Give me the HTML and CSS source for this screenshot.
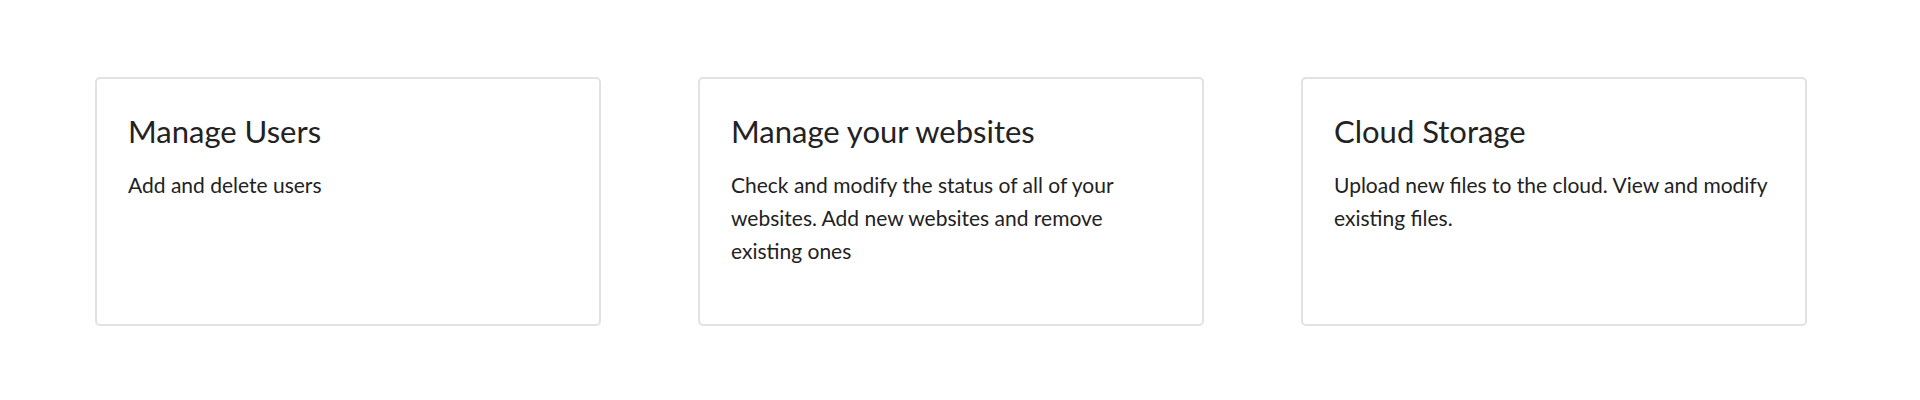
FILE: index.html
```html
<!DOCTYPE html>
<html lang="en">
<head>
<meta charset="utf-8">
<title>Dashboard</title>
<link rel="stylesheet" href="styles.css">
</head>
<body>
<main class="cards">
  <section class="card">
    <h2 class="card-title">Manage Users</h2>
    <p class="card-text">Add and delete users</p>
  </section>
  <section class="card">
    <h2 class="card-title">Manage your websites</h2>
    <p class="card-text">Check and modify the status of all of your websites. Add new websites and remove existing ones</p>
  </section>
  <section class="card">
    <h2 class="card-title">Cloud Storage</h2>
    <p class="card-text">Upload new files to the cloud. View and modify existing files.</p>
  </section>
</main>
</body>
</html>
```

FILE: styles.css
```css
html, body {
  margin: 0;
  padding: 0;
  background: #ffffff;
}

body {
  font-family: Lato, "Open Sans", "Liberation Sans", sans-serif;
  color: #222222;
}

.cards {
  display: flex;
  gap: 97px;
  padding: 77px 0 0 95px;
}

.card {
  box-sizing: border-box;
  width: 506px;
  height: 249px;
  border: 2px solid #e2e2e2;
  border-radius: 5px;
  padding: 32px 32px 0 31px;
}

.card-title {
  margin: 0;
  font-size: 31px;
  font-weight: 400;
  line-height: 40px;
}

.card-text {
  margin: 17px 0 0;
  font-size: 21px;
  line-height: 33px;
}
```
